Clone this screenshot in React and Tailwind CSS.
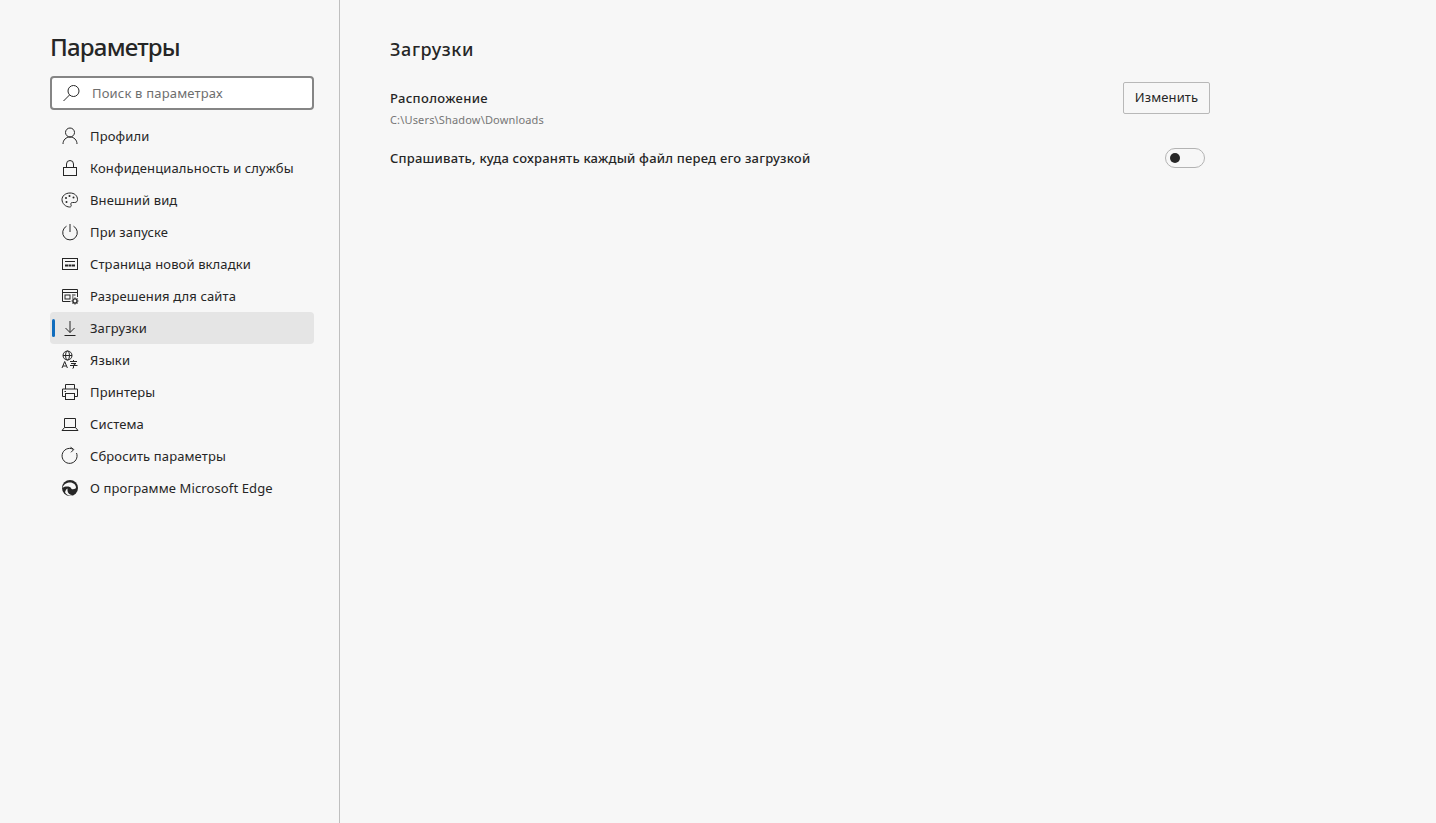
import React from 'react';

const font = "font-['Noto_Sans','Open_Sans',sans-serif]";

// Icons are drawn on a 20x20 box, thin strokes like the Edge settings glyphs
const Icon = ({ children }) => (
  <svg width="20" height="20" viewBox="0 0 20 20" fill="none" stroke="#262626" strokeWidth="1">
    {children}
  </svg>
);

const icons = {
  profile: (
    <Icon>
      <circle cx="10" cy="6.500" r="4.500" />
      <path d="M3 18c0-4 3-7 7-7s7 3 7 7" />
    </Icon>
  ),
  lock: (
    <Icon>
      <rect x="3.500" y="9.500" width="13" height="8" />
      <path d="M6.500 9.500V6a3.500 3.500 0 0 1 7 0v3.500" />
    </Icon>
  ),
  palette: (
    <Icon>
      <path d="M10 3c-4.600 0-8 2.900-8 6.600 0 3.800 3.600 7.400 7.600 7.400 1.600 0 1.900-1.100 1.400-2.200-.6-1.300.1-2.300 1.500-2.300h2.200c1.900 0 2.800-1.300 2.800-3C17.500 5.600 14.400 3 10 3z" />
      <circle cx="6" cy="8" r="1" fill="#262626" stroke="none" />
      <circle cx="9.500" cy="6" r="1" fill="#262626" stroke="none" />
      <circle cx="13.500" cy="7.500" r="1" fill="#262626" stroke="none" />
      <circle cx="6.500" cy="12" r="1" fill="#262626" stroke="none" />
    </Icon>
  ),
  power: (
    <Icon>
      <path d="M6.500 4.200a7.300 7.300 0 1 0 7 0" />
      <path d="M10 2v8" />
    </Icon>
  ),
  newTab: (
    <Icon>
      <rect x="2.500" y="4.500" width="15" height="11" />
      <path d="M5 7.500h10" />
      <path d="M5 10.500h3v2H5zM8.500 10.500h3v2h-3zM12 10.500h3v2h-3z" fill="#262626" stroke="none" />
    </Icon>
  ),
  site: (
    <Icon>
      <path d="M10.500 15.500h-8v-12h15v7.500" />
      <path d="M2.500 6.500h15" />
      <rect x="5" y="9" width="5" height="4" />
      <path d="M12 9h3.500M12 11h1.500" />
      <circle cx="15" cy="15" r="2" strokeWidth="1.200" />
      <path d="M15 11.500v1.500M15 17v1.500M11.500 15H13M17 15h1.500M12.500 12.500l1 1M16.500 16.500l1 1M12.500 17.500l1-1M16.500 13.500l1-1" strokeWidth="1.200" />
    </Icon>
  ),
  download: (
    <Icon>
      <path d="M10 3v11.500M5.500 10l4.500 4.500 4.500-4.500" />
      <path d="M4.500 17.500h11" />
    </Icon>
  ),
  lang: (
    <Icon>
      <circle cx="7.500" cy="5.500" r="4.500" />
      <ellipse cx="7.500" cy="5.500" rx="2" ry="4.500" />
      <path d="M3 5.500h9" />
      <path d="M2 18l2.700-6.500L7.400 18M3 16h3.400" />
      <path d="M10 11.500h7M13.500 10v1.500M11 13.500h5l-2.500 1.500v3l-1 .300M10 15.500h7.500" />
    </Icon>
  ),
  printer: (
    <Icon>
      <path d="M5.500 7V2.500h9V7" />
      <path d="M5.500 14.500H2.500V7h15v7.500h-3" />
      <rect x="5.500" y="11.500" width="9" height="6" />
      <path d="M4.500 9.500h1.500" />
    </Icon>
  ),
  laptop: (
    <Icon>
      <path d="M4.500 13.500V4.500h11v9" />
      <path d="M4.500 13.500L2 16.500h16l-2.500-3z" />
    </Icon>
  ),
  reset: (
    <Icon>
      <path d="M16.500 7A7.500 7.500 0 1 1 13 3.200" />
      <path d="M10.500 1.200L13.800 3.500 11 6.300" />
    </Icon>
  ),
  edge: (
    <svg width="20" height="20" viewBox="0 0 20 20">
      <circle cx="10" cy="10" r="8" fill="#262626" />
      <path d="M2.500 10C3.500 6 7 4.500 10 4.500c3.500 0 6 2.500 6 5 0 1.200-1.500 1.700-3 1.700-1.200 0-1.800-.4-1.800-1-1-2-6-2.500-8.700-.2z" fill="#f7f7f7" />
      <path d="M7.500 12.500c0 2.500 2 4.500 5.500 4.800-3 1-6.500 0-8-3 .5-2 1.500-3.300 2.500-3.800z" fill="#f7f7f7" />
    </svg>
  ),
};

const nav = [
  ['profile', 'Профили'],
  ['lock', 'Конфиденциальность и службы'],
  ['palette', 'Внешний вид'],
  ['power', 'При запуске'],
  ['newTab', 'Страница новой вкладки'],
  ['site', 'Разрешения для сайта'],
  ['download', 'Загрузки', true],
  ['lang', 'Языки'],
  ['printer', 'Принтеры'],
  ['laptop', 'Система'],
  ['reset', 'Сбросить параметры'],
  ['edge', 'О программе Microsoft Edge'],
];

function NavItem({ icon, label, active }) {
  return (
    <div className={`relative flex h-8 items-center rounded-sm pl-[10px] ${active ? 'bg-[#e5e5e5]' : ''}`}>
      {active && <span className="absolute left-[2px] top-[7px] h-[18px] w-[3px] rounded-sm bg-[#0f6cbd]" />}
      <span className="flex h-5 w-5 shrink-0 items-center justify-center">{icons[icon]}</span>
      <span className="ml-[10px] pt-[2px] text-[13px] tracking-[0.12px] text-[#262626]">{label}</span>
    </div>
  );
}

export default function App() {
  return (
    <div className={`flex h-[823px] w-full overflow-hidden bg-[#f7f7f7] ${font}`}>
      <aside className="flex w-[340px] shrink-0 flex-col border-r border-[#bfbfbf] pl-[50px] pr-[25px]">
        <h1 className="mt-[30px] h-[34px] text-[24px] font-medium leading-[34px] tracking-[-0.8px] text-[#262626]">Параметры</h1>
        <div className="mt-[12px] flex h-[34px] items-center rounded-sm border-2 border-[#858585] bg-white pl-[10px]">
          <svg width="20" height="20" viewBox="0 0 20 20" fill="none" stroke="#262626" strokeWidth="1">
            <circle cx="11.500" cy="8" r="5.500" />
            <path d="M7.500 12L1.500 18" />
          </svg>
          <span className="ml-[10px] pt-[2px] text-[13px] tracking-[0.18px] text-[#6e6e6e]">Поиск в параметрах</span>
        </div>
        <nav className="mt-[10px] flex flex-col">
          {nav.map(([icon, label, active]) => (
            <NavItem key={label} icon={icon} label={label} active={active} />
          ))}
        </nav>
      </aside>
      <main className="w-[870px] pl-[50px]">
        <h2 className="mt-[35px] h-[28px] text-[18px] font-medium leading-[28px] tracking-[0.6px] text-[#262626]">Загрузки</h2>
        <div className="mt-[19px] flex items-start justify-between">
          <div>
            <div className="mt-[5px] text-[13px] font-medium leading-[22px] tracking-[0.35px] text-[#262626]">Расположение</div>
            <div className="mt-[2px] text-[11px] leading-[18px] tracking-[0.16px] text-[#767676]">C:\Users\Shadow\Downloads</div>
          </div>
          <button className="h-8 w-[87px] rounded-[2px] border border-[#b8b8b8] text-[13px] tracking-[0.1px] text-[#262626]">Изменить</button>
        </div>
        <div className="mt-[17px] flex h-6 items-center justify-between pr-[5px]">
          <span className="pt-[2px] text-[13px] font-medium tracking-[0.2px] text-[#262626]">Спрашивать, куда сохранять каждый файл перед его загрузкой</span>
          <span className="flex h-5 w-10 items-center rounded-full border border-[#b3b3b3] pl-[4px]">
            <span className="h-[10px] w-[10px] rounded-full bg-[#262626]" />
          </span>
        </div>
      </main>
    </div>
  );
}
